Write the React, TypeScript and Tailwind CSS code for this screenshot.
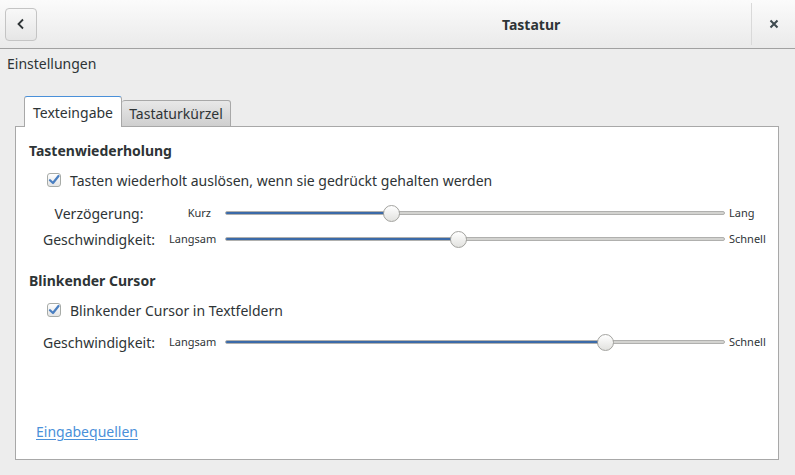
import React from 'react';

function Check() {
  return (
    <div className="w-[14px] h-[14px] rounded-[3px] border border-[#a7aba7] bg-gradient-to-b from-white to-[#e4e4e4] flex items-center justify-center shrink-0">
      <svg width="12" height="12" viewBox="0 0 12 12">
        <path d="M2 6.2 L5 9 L10.5 2" fill="none" stroke="#4a7fc1" strokeWidth="2.2" strokeLinecap="round" strokeLinejoin="round" />
      </svg>
    </div>
  );
}

function Slider({ label, min, max, value }: { label: string; min: string; max: string; value: number }) {
  return (
    <div className="flex items-center h-[26px]">
      <div className="w-[140px] text-center">{label}</div>
      <div className="w-[56px] text-right text-[11px] pr-[14px]">{min}</div>
      <div className="relative w-[500px] h-[4px] rounded-full bg-[#d3d3d0] border border-[#b0b0ae]">
        <div className="h-full rounded-full bg-[#5a8fd0] border-y border-[#3b6aa8]" style={{ width: value }} />
        <div
          className="absolute top-1/2 w-[17px] h-[17px] -mt-[8.5px] -ml-[8.5px] rounded-full border border-[#a3a39f] bg-gradient-to-b from-white to-[#e2e2df]"
          style={{ left: value }}
        />
      </div>
      <div className="pl-[4px] text-[11px]">{max}</div>
    </div>
  );
}

export default function App() {
  return (
    <div className="w-[795px] h-[475px] bg-[#ededed] flex flex-col font-['Noto_Sans',sans-serif] text-[14px] text-[#2e3436] overflow-hidden">
      <div className="h-[49px] shrink-0 border-b border-[#a1a1a1] bg-gradient-to-b from-[#fbfbfb] to-[#eaeaea] flex items-center">
        <button className="ml-[5px] w-[32px] h-[33px] rounded-[4px] border border-[#c4c4c4] bg-gradient-to-b from-[#f8f8f8] to-[#e6e6e6] flex items-center justify-center">
          <svg width="12" height="12" viewBox="0 0 12 12">
            <path d="M8 1.5 L3.5 6 L8 10.5" fill="none" stroke="#2e3436" strokeWidth="1.8" />
          </svg>
        </button>
        <div className="ml-[465px] font-bold">Tastatur</div>
        <div className="ml-auto w-px h-[42px] bg-[#d9d9d9]" />
        <div className="w-[43px] flex items-center justify-center">
          <svg width="10" height="10" viewBox="0 0 10 10">
            <path d="M1.5 1.5 L8.5 8.5 M8.5 1.5 L1.5 8.5" stroke="#3e4a4f" strokeWidth="2" />
          </svg>
        </div>
      </div>
      <div className="flex-1 flex flex-col pl-[15px] pr-[16px] pb-[15px]">
        <div className="-ml-[8px] pt-[6px] h-[48px] leading-[18px]">Einstellungen</div>
        <div className="flex items-end pl-[9px] h-[30px] relative z-10 -mb-px">
          <div className="h-[31px] w-[98px] bg-white border border-b-0 border-[#a8a8a8] border-t-[#4a90d9] rounded-t-[3px] flex items-center justify-center">
            Texteingabe
          </div>
          <div className="h-[27px] w-[109px] bg-gradient-to-b from-[#e8e8e8] to-[#cfcfcf] border border-l-0 border-[#a8a8a8] rounded-t-[3px] flex items-center justify-center">
            Tastaturkürzel
          </div>
        </div>
        <div className="flex-1 bg-white border border-[#a8a8a8] flex flex-col pl-[13px] pt-[14px]">
          <div className="font-bold leading-[20px]">Tastenwiederholung</div>
          <div className="flex items-center gap-[9px] pl-[18px] mt-[9px] h-[20px]">
            <Check />
            <span>Tasten wiederholt auslösen, wenn sie gedrückt gehalten werden</span>
          </div>
          <div className="mt-[10px]">
            <Slider label="Verzögerung:" min="Kurz" max="Lang" value={165} />
            <Slider label="Geschwindigkeit:" min="Langsam" max="Schnell" value={232} />
          </div>
          <div className="font-bold leading-[20px] mt-[19px]">Blinkender Cursor</div>
          <div className="flex items-center gap-[9px] pl-[18px] mt-[9px] h-[20px]">
            <Check />
            <span>Blinkender Cursor in Textfeldern</span>
          </div>
          <div className="mt-[9px]">
            <Slider label="Geschwindigkeit:" min="Langsam" max="Schnell" value={379} />
          </div>
          <div className="mt-auto mb-[17px] pl-[7px]">
            <a className="text-[#4a90d9] underline underline-offset-2">Eingabequellen</a>
          </div>
        </div>
      </div>
    </div>
  );
}
